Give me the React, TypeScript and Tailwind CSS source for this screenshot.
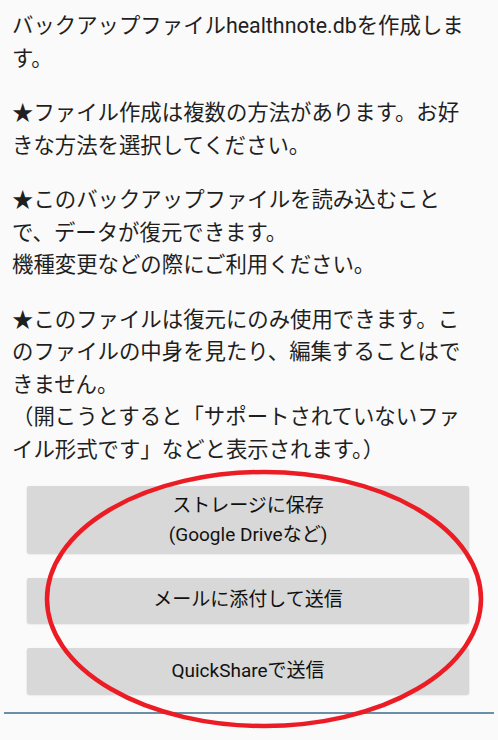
export default function App() {
  const paras: string[][] = [
    ["バックアップファイルhealthnote.dbを作成しま", "す。"],
    ["★ファイル作成は複数の方法があります。お好", "きな方法を選択してください。"],
    [
      "★このバックアップファイルを読み込むこと",
      "で、データが復元できます。",
      "機種変更などの際にご利用ください。",
    ],
    [
      "★このファイルは復元にのみ使用できます。こ",
      "のファイルの中身を見たり、編集することはで",
      "きません。",
      "（開こうとすると「サポートされていないファ",
      "イル形式です」などと表示されます。）",
    ],
  ];

  return (
    <div className="relative h-[740px] w-[498px] overflow-hidden bg-[#fafafa] font-['Roboto','Noto_Sans_CJK_JP',sans-serif] text-[#1f1f1f]">
      <div className="flex flex-col gap-[22px] px-3 pt-[10px]">
        {paras.map((lines, i) => (
          <div key={i} className="text-[21.4px] leading-[32.5px]">
            {lines.map((l, j) => (
              <div key={j} className="whitespace-nowrap">
                {l}
              </div>
            ))}
          </div>
        ))}
      </div>

      <div className="mt-[20px] flex flex-col gap-[25px] pl-[27px] pr-[29px]">
        <button className="flex h-[67px] flex-col items-center justify-center rounded-[2px] bg-[#d7d8d7] text-[19px] leading-[29px] font-normal text-[#111] shadow-[0_1px_2px_rgba(0,0,0,0.18)]">
          <span>ストレージに保存</span>
          <span>(Google Driveなど)</span>
        </button>
        <button className="flex h-[45px] items-center justify-center rounded-[2px] bg-[#d7d8d7] text-[19px] font-normal text-[#111] shadow-[0_1px_2px_rgba(0,0,0,0.18)]">
          メールに添付して送信
        </button>
        <button className="flex h-[46px] items-center justify-center rounded-[2px] bg-[#d7d8d7] text-[19px] font-normal text-[#111] shadow-[0_1px_2px_rgba(0,0,0,0.18)]">
          QuickShareで送信
        </button>
      </div>

      <div className="mx-[4px] mt-[18px] h-[2px] bg-[#6b8fa6]" />

      <svg
        className="pointer-events-none absolute left-0 top-0"
        width="498"
        height="740"
        viewBox="0 0 498 740"
      >
        <ellipse cx="264" cy="599" rx="217" ry="127" fill="none" stroke="#ec1c24" strokeWidth="4.5" />
      </svg>
    </div>
  );
}
